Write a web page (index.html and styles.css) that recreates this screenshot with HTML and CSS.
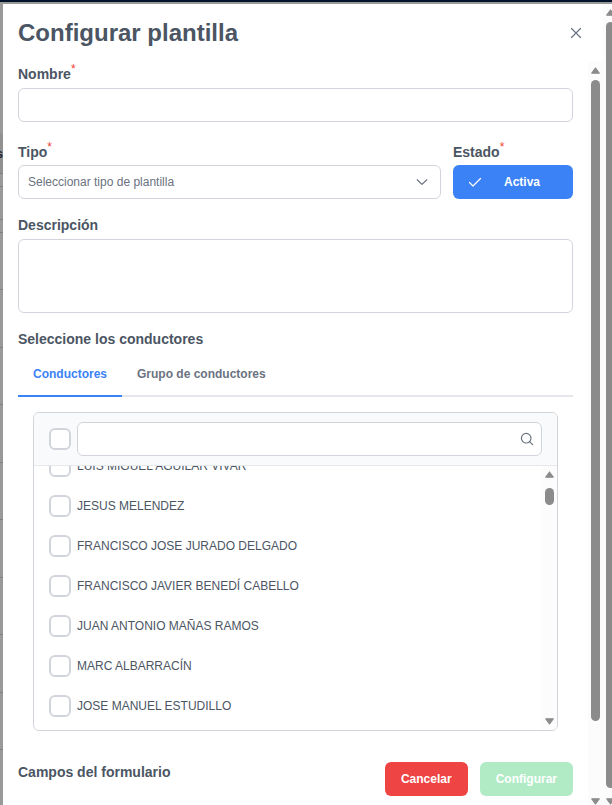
FILE: index.html
```html
<!DOCTYPE html>
<html lang="es">
<head>
    <meta charset="UTF-8">
    <meta name="viewport" content="width=device-width, initial-scale=1.0">
    <title>Configurar plantilla</title>
    <link rel="stylesheet" href="styles.css">
</head>
<body>
    <div class="topbar"></div>
    <div class="page">
        <div class="backdrop"><span class="backdrop-text">s</span></div>
        <main class="dialog">
            <header class="dialog-header">
                <h1>Configurar plantilla</h1>
                <button type="button" class="close" aria-label="Cerrar">
                    <svg width="12" height="12" viewBox="0 0 12 12"><path d="M1.5 1.5L10.5 10.5M10.5 1.5L1.5 10.5"/></svg>
                </button>
            </header>
            <div class="dialog-body">
                <form class="form">
                    <div class="field">
                        <label for="nombre">Nombre<span class="required">*</span></label>
                        <input type="text" id="nombre" class="control">
                    </div>
                    <div class="field-row">
                        <div class="field field-grow">
                            <label for="tipo">Tipo<span class="required">*</span></label>
                            <div class="select-wrap">
                                <select id="tipo" class="control">
                                    <option>Seleccionar tipo de plantilla</option>
                                </select>
                                <svg class="chevron" width="12" height="12" viewBox="0 0 12 12"><path d="M1.2 3.8L6 8.4L10.8 3.8"/></svg>
                            </div>
                        </div>
                        <div class="field field-estado">
                            <label for="estado">Estado<span class="required">*</span></label>
                            <button type="button" id="estado" class="btn btn-toggle">
                                <svg width="14" height="14" viewBox="0 0 14 14"><path d="M1.5 7.5L5 11L12.5 3.5"/></svg>
                                <span>Activa</span>
                            </button>
                        </div>
                    </div>
                    <div class="field">
                        <label for="descripcion">Descripción</label>
                        <textarea id="descripcion" class="control"></textarea>
                    </div>
                    <h2>Seleccione los conductores</h2>
                    <div class="tabs">
                        <button type="button" class="tab active">Conductores</button>
                        <button type="button" class="tab">Grupo de conductores</button>
                    </div>
                    <div class="listbox">
                        <div class="listbox-header">
                            <input type="checkbox" class="check" aria-label="Seleccionar todos">
                            <div class="search">
                                <input type="text" class="control" aria-label="Buscar">
                                <svg class="search-icon" width="14" height="14" viewBox="0 0 14 14"><circle cx="6.2" cy="6.2" r="4.8"/><path d="M9.7 9.7L12.6 12.6"/></svg>
                            </div>
                        </div>
                        <div class="listbox-body">
                            <div class="items">
                                <label class="item"><input type="checkbox" class="check">LUIS MIGUEL AGUILAR VIVAR</label>
                                <label class="item"><input type="checkbox" class="check">JESUS MELENDEZ</label>
                                <label class="item"><input type="checkbox" class="check">FRANCISCO JOSE JURADO DELGADO</label>
                                <label class="item"><input type="checkbox" class="check">FRANCISCO JAVIER BENEDÍ CABELLO</label>
                                <label class="item"><input type="checkbox" class="check">JUAN ANTONIO MAÑAS RAMOS</label>
                                <label class="item"><input type="checkbox" class="check">MARC ALBARRACÍN</label>
                                <label class="item"><input type="checkbox" class="check">JOSE MANUEL ESTUDILLO</label>
                            </div>
                            <div class="scrollbar">
                                <svg class="arrow" width="9" height="7" viewBox="0 0 9 7"><path d="M4.5 1L8.2 6.2H0.8Z"/></svg>
                                <div class="track"><div class="thumb thumb-list"></div></div>
                                <svg class="arrow" width="9" height="7" viewBox="0 0 9 7"><path d="M4.5 6L8.2 0.8H0.8Z"/></svg>
                            </div>
                        </div>
                    </div>
                    <div class="footer">
                        <h2>Campos del formulario</h2>
                        <div class="actions">
                            <button type="button" class="btn btn-danger">Cancelar</button>
                            <button type="submit" class="btn btn-success" disabled>Configurar</button>
                        </div>
                    </div>
                </form>
                <div class="scrollbar scrollbar-open">
                    <svg class="arrow" width="9" height="7" viewBox="0 0 9 7"><path d="M4.5 1L8.2 6.2H0.8Z"/></svg>
                    <div class="track"><div class="thumb thumb-dialog"></div></div>
                    <svg class="arrow" width="9" height="7" viewBox="0 0 9 7"><path d="M4.5 6L8.2 0.8H0.8Z"/></svg>
                </div>
            </div>
        </main>
        <div class="scrollbar scrollbar-open scrollbar-page">
            <svg class="arrow" width="9" height="7" viewBox="0 0 9 7"><path d="M4.5 1L8.2 6.2H0.8Z"/></svg>
            <div class="track"><div class="thumb thumb-page"></div></div>
            <svg class="arrow" width="9" height="7" viewBox="0 0 9 7"><path d="M4.5 6L8.2 0.8H0.8Z"/></svg>
        </div>
    </div>
</body>
</html>
```
FILE: styles.css
```css
* {
    box-sizing: border-box;
}

body {
    margin: 0;
    height: 100vh;
    display: flex;
    flex-direction: column;
    overflow: hidden;
    font-family: "Liberation Sans", Arial, sans-serif;
    font-size: 12px;
    color: #4b5563;
    background: #999;
}

h1, h2 {
    margin: 0;
}

h1 {
    font-size: 24px;
    line-height: 28px;
}

h2, .field label {
    font-size: 14px;
    font-weight: bold;
    line-height: 16px;
}

button, input, select, textarea {
    font-family: inherit;
    font-size: 12px;
    color: inherit;
    margin: 0;
}

svg {
    fill: none;
    stroke: #6b7280;
    stroke-width: 1.2;
    stroke-linecap: round;
    stroke-linejoin: round;
}

.topbar {
    flex: none;
    height: 2px;
    background: #02122b;
}

.page {
    flex: 1;
    min-height: 0;
    display: flex;
    padding-top: 2px;
}

/* edge of the table behind the dialog */
.backdrop {
    flex: none;
    width: 3px;
    padding-top: 143px;
    overflow: hidden;
    direction: rtl;
    background:
        linear-gradient(#999 130px, #919191 130px 169px, #808080 169px 170px, #999 170px 182px, #808080 182px 183px, #999 183px 215px, #808080 215px 216px, #999 216px) top / 100% 228px no-repeat,
        repeating-linear-gradient(#999 0 55px, #808080 55px 56px, #999 56px 113px, #808080 113px 114px, #999 114px 115px);
}

.backdrop-text {
    font-weight: bold;
    color: #1c2430;
}

.dialog {
    flex: 1;
    min-width: 0;
    display: flex;
    flex-direction: column;
    background: #fff;
}

.dialog-header {
    flex: none;
    height: 58px;
    display: flex;
    justify-content: space-between;
    align-items: center;
    padding: 0 15px;
}

.close {
    width: 24px;
    height: 24px;
    padding: 6px;
    border: none;
    background: none;
}

.close svg {
    display: block;
}

.dialog-body {
    flex: 1;
    min-height: 0;
    display: flex;
}

.form {
    flex: 1;
    min-width: 0;
    padding: 4px 15px 0;
}

.field {
    display: flex;
    flex-direction: column;
    gap: 6px;
    margin-bottom: 18px;
}

.field-row {
    display: flex;
    gap: 12px;
    padding-top: 4px;
}

.field-row .field {
    gap: 5px;
}

.field-grow {
    flex: 1;
}

.field-estado {
    width: 120px;
}

.required {
    position: relative;
    top: -6px;
    font-size: 12px;
    font-weight: normal;
    line-height: 1;
    color: #f44336;
}

.control {
    display: block;
    width: 100%;
    height: 34px;
    padding: 0 9px;
    border: 1px solid #d1d5db;
    border-radius: 6px;
    background: #fff;
    outline: none;
}

textarea.control {
    height: 74px;
    resize: none;
}

.select-wrap, .search {
    position: relative;
}

.select-wrap select {
    appearance: none;
    color: #6b7280;
}

.chevron {
    position: absolute;
    right: 13px;
    top: 11px;
}

.btn {
    height: 34px;
    padding: 0 16px;
    border: none;
    border-radius: 6px;
    font-weight: bold;
    color: #fff;
}

.btn-toggle {
    display: flex;
    align-items: center;
    gap: 4px;
    padding: 0 15px;
    background: #3b82f6;
}

.btn-toggle svg {
    stroke: #fff;
}

.btn-toggle span {
    flex: 1;
}

.btn-danger {
    background: #ef4444;
}

.btn-success {
    background: #b0ebc6;
}

.tabs {
    display: flex;
    margin-top: 4px;
    border-bottom: 2px solid #e5e7eb;
}

.tab {
    height: 46px;
    margin-bottom: -2px;
    padding: 2px 15px 0;
    border: none;
    border-bottom: 2px solid transparent;
    background: none;
    font-weight: bold;
    color: #6b7280;
}

.tab.active {
    border-color: #3b82f6;
    color: #3b82f6;
}

.listbox {
    margin: 15px 15px 0;
    border: 1px solid #d1d5db;
    border-radius: 6px;
    overflow: hidden;
}

.listbox-header {
    display: flex;
    align-items: center;
    gap: 6px;
    padding: 9px 15px;
    border-bottom: 1px solid #e5e7eb;
    background: #f9fafb;
}

.search {
    flex: 1;
}

.search-icon {
    position: absolute;
    right: 8px;
    top: 10px;
}

.check {
    appearance: none;
    flex: none;
    width: 22px;
    height: 22px;
    border: 2px solid #d1d5db;
    border-radius: 6px;
    background: #fff;
}

.listbox-body {
    height: 264px;
    display: flex;
}

/* the list is scrolled, so the first row is partly hidden */
.items {
    flex: 1;
    display: flex;
    flex-direction: column;
    justify-content: flex-end;
    padding-bottom: 4px;
    overflow: hidden;
}

.item {
    flex: none;
    height: 40px;
    display: flex;
    align-items: center;
    gap: 6px;
    padding: 0 15px;
}

.footer {
    display: flex;
    justify-content: space-between;
    margin-top: 31px;
}

.footer h2 {
    padding-top: 2px;
}

.actions {
    display: flex;
    gap: 12px;
}

.scrollbar {
    flex: none;
    width: 15px;
    display: flex;
    flex-direction: column;
    padding: 5px 3px;
    background: #fcfcfc;
}

.track {
    flex: 1;
    display: flex;
    flex-direction: column;
    padding: 6px 0;
}

.arrow {
    flex: none;
    fill: #8b8b8b;
    stroke: #8b8b8b;
}

.thumb {
    width: 9px;
    border-radius: 5px;
    background: #8b8b8b;
}

.thumb-list {
    height: 17px;
    margin-top: 4px;
}

/* these two run down to the bottom edge of the window */
.scrollbar-open {
    padding-bottom: 0;
}

.thumb-dialog {
    flex: 0 0 90%;
}

.thumb-page {
    flex: 1;
    margin-bottom: 4px;
}

.scrollbar-page {
    width: 9px;
    padding-right: 0;
    overflow: hidden;
}
```
